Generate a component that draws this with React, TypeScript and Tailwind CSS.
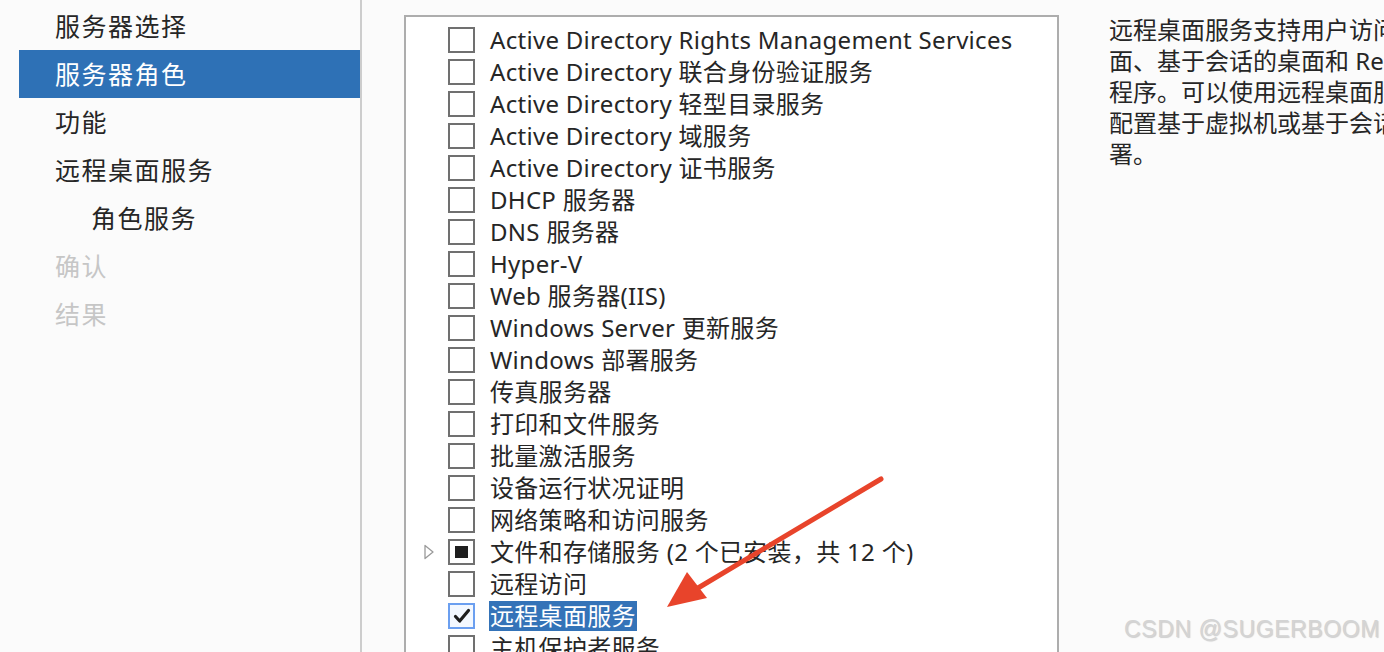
import React from 'react';

type Role = {
  label: string;
  state?: 'checked' | 'partial';
  expandable?: boolean;
};

const navItems = [
  { label: '服务器选择', indent: false, active: false, disabled: false },
  { label: '服务器角色', indent: false, active: true, disabled: false },
  { label: '功能', indent: false, active: false, disabled: false },
  { label: '远程桌面服务', indent: false, active: false, disabled: false },
  { label: '角色服务', indent: true, active: false, disabled: false },
  { label: '确认', indent: false, active: false, disabled: true },
  { label: '结果', indent: false, active: false, disabled: true },
];

const roles: Role[] = [
  { label: 'Active Directory Rights Management Services' },
  { label: 'Active Directory 联合身份验证服务' },
  { label: 'Active Directory 轻型目录服务' },
  { label: 'Active Directory 域服务' },
  { label: 'Active Directory 证书服务' },
  { label: 'DHCP 服务器' },
  { label: 'DNS 服务器' },
  { label: 'Hyper-V' },
  { label: 'Web 服务器(IIS)' },
  { label: 'Windows Server 更新服务' },
  { label: 'Windows 部署服务' },
  { label: '传真服务器' },
  { label: '打印和文件服务' },
  { label: '批量激活服务' },
  { label: '设备运行状况证明' },
  { label: '网络策略和访问服务' },
  { label: '文件和存储服务 (2 个已安装，共 12 个)', state: 'partial', expandable: true },
  { label: '远程访问' },
  { label: '远程桌面服务', state: 'checked' },
  { label: '主机保护者服务' },
];

const descLines = [
  '远程桌面服务支持用户访问虚拟桌',
  '面、基于会话的桌面和 RemoteApp',
  '程序。可以使用远程桌面服务安装来',
  '配置基于虚拟机或基于会话的部',
  '署。',
];

const Checkbox: React.FC<{ state?: Role['state'] }> = ({ state }) => {
  if (state === 'checked') {
    return (
      <div className="w-[27px] h-[26px] border-2 border-[#6b9ff0] bg-[#f3f8ff] flex items-center justify-center">
        <svg className="w-[18px] h-[18px]" viewBox="0 0 18 18" fill="none">
          <path d="M2.5 9.5l4.2 4.5L15.5 3.5" stroke="#1e1e1e" strokeWidth={3.2} strokeLinecap="round" strokeLinejoin="round" />
        </svg>
      </div>
    );
  }
  return (
    <div className="w-[27px] h-[26px] border-2 border-[#707070] bg-white flex items-center justify-center">
      {state === 'partial' && <div className="w-[13px] h-[12px] bg-[#1e1e1e]" />}
    </div>
  );
};

export default function App() {
  return (
    <div
      className="relative w-[1384px] h-[652px] overflow-hidden bg-[#fbfbfb] flex text-[#262626]"
      style={{ fontFamily: '"Noto Sans", "Noto Sans CJK SC", sans-serif' }}
    >
      {/* left steps */}
      <div className="w-[362px] shrink-0 pt-[2px] border-r-2 border-[#cdcdcd] h-full">
        {navItems.map(item => (
          <div
            key={item.label}
            className={`h-[48px] ml-[19px] flex items-center text-[25px] tracking-[1.5px] leading-none ${
              item.active ? 'bg-[#2e71b6] text-white' : item.disabled ? 'text-[#c6c6c6]' : 'text-[#262626]'
            } ${item.indent ? 'pl-[72px]' : 'pl-[36px]'}`}
          >
            {item.label}
          </div>
        ))}
      </div>

      {/* role list */}
      <div className="pl-[42px] pt-[15px] shrink-0">
        <div className="w-[655px] h-[700px] border-2 border-[#adadad] bg-white pt-[7px]">
          {roles.map(role => (
            <div key={role.label} className="h-[32px] flex items-center">
              <div className="w-[42px] flex justify-center pl-[4px]">
                {role.expandable && (
                  <svg className="w-[12px] h-[16px]" viewBox="0 0 12 16" fill="none">
                    <path d="M2 1.5L10 8L2 14.5Z" stroke="#9a9a9a" strokeWidth={1.3} strokeLinejoin="round" />
                  </svg>
                )}
              </div>
              <Checkbox state={role.state} />
              <span
                className={`ml-[14px] text-[24px] leading-[30px] whitespace-nowrap px-[1px] tracking-[0.3px] ${
                  role.state === 'checked' ? 'bg-[#3473b8] text-white' : ''
                }`}
              >
                {role.label}
              </span>
            </div>
          ))}
        </div>
      </div>

      {/* description */}
      <div className="pl-[50px] pt-[14px] text-[24px] leading-[31px] whitespace-nowrap">
        {descLines.map(line => (
          <div key={line}>{line}</div>
        ))}
      </div>

      {/* annotation arrow */}
      <svg className="absolute left-0 top-0 pointer-events-none" width="1384" height="652">
        <line x1="881" y1="479" x2="698" y2="588" stroke="#e8442b" strokeWidth={5} strokeLinecap="round" />
        <path d="M667 607L687 572L707 598Z" fill="#e8442b" />
      </svg>

      {/* watermark */}
      <div
        className="absolute right-[4px] bottom-[11px] text-[23px] leading-none text-[#d4d4d4] tracking-[0.6px]"
        style={{ fontFamily: '"Liberation Sans", Arial, sans-serif', textShadow: '1px 1px 1px rgba(0,0,0,0.18)' }}
      >
        CSDN @SUGERBOOM
      </div>
    </div>
  );
}
